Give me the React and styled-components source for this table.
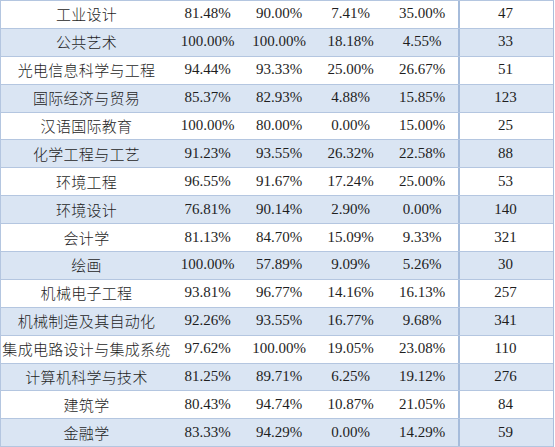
import React from "react";
import styled, { createGlobalStyle } from "styled-components";

const Global = createGlobalStyle`
  html, body { margin: 0; padding: 0; background: #ffffff; }
  body { width: 555px; height: 447px; overflow: hidden; }
`;

const rows = [
  ["工业设计", "81.48%", "90.00%", "7.41%", "35.00%", "47"],
  ["公共艺术", "100.00%", "100.00%", "18.18%", "4.55%", "33"],
  ["光电信息科学与工程", "94.44%", "93.33%", "25.00%", "26.67%", "51"],
  ["国际经济与贸易", "85.37%", "82.93%", "4.88%", "15.85%", "123"],
  ["汉语国际教育", "100.00%", "80.00%", "0.00%", "15.00%", "25"],
  ["化学工程与工艺", "91.23%", "93.55%", "26.32%", "22.58%", "88"],
  ["环境工程", "96.55%", "91.67%", "17.24%", "25.00%", "53"],
  ["环境设计", "76.81%", "90.14%", "2.90%", "0.00%", "140"],
  ["会计学", "81.13%", "84.70%", "15.09%", "9.33%", "321"],
  ["绘画", "100.00%", "57.89%", "9.09%", "5.26%", "30"],
  ["机械电子工程", "93.81%", "96.77%", "14.16%", "16.13%", "257"],
  ["机械制造及其自动化", "92.26%", "93.55%", "16.77%", "9.68%", "341"],
  ["集成电路设计与集成系统", "97.62%", "100.00%", "19.05%", "23.08%", "110"],
  ["计算机科学与技术", "81.25%", "89.71%", "6.25%", "19.12%", "276"],
  ["建筑学", "80.43%", "94.74%", "10.87%", "21.05%", "84"],
  ["金融学", "83.33%", "94.29%", "0.00%", "14.29%", "59"],
];

const Table = styled.div`
  width: 554px;
  border-top: 1px solid #b4c6e0;
  border-left: 1px solid #b4c6e0;
  border-right: 1px solid #a9bedc;
  box-sizing: border-box;
  display: flex;
  flex-direction: column;
`;

const Row = styled.div`
  display: grid;
  grid-template-columns: 171px 71px 72px 71px 72px 1fr;
  height: 27.9px;
  box-sizing: border-box;
  border-bottom: 1px solid #b4c6e0;
  background: ${(p) => (p.$shaded ? "#dae5f3" : "#ffffff")};
`;

const Cell = styled.div`
  display: flex;
  align-items: center;
  justify-content: center;
  white-space: nowrap;
  color: #1e1e1e;
  font-family: ${(p) =>
    p.$cjk
      ? '"Noto Sans CJK SC", "Noto Sans", sans-serif'
      : '"Liberation Serif", "Times New Roman", serif'};
  font-size: 15px;
  font-weight: ${(p) => (p.$cjk ? 300 : 400)};
  letter-spacing: ${(p) => (p.$cjk ? "0.3px" : "0")};
  padding-bottom: 1px;
  border-left: ${(p) => (p.$divider ? "2px solid #a6bcdb" : "none")};
  padding-right: ${(p) => (p.$divider ? "2px" : "0")};
`;

export default function App() {
  return (
    <>
      <Global />
      <Table>
        {rows.map((r, i) => (
          <Row key={r[0]} $shaded={i % 2 === 1}>
            <Cell $cjk>{r[0]}</Cell>
            <Cell>{r[1]}</Cell>
            <Cell>{r[2]}</Cell>
            <Cell>{r[3]}</Cell>
            <Cell>{r[4]}</Cell>
            <Cell $divider>{r[5]}</Cell>
          </Row>
        ))}
      </Table>
    </>
  );
}
